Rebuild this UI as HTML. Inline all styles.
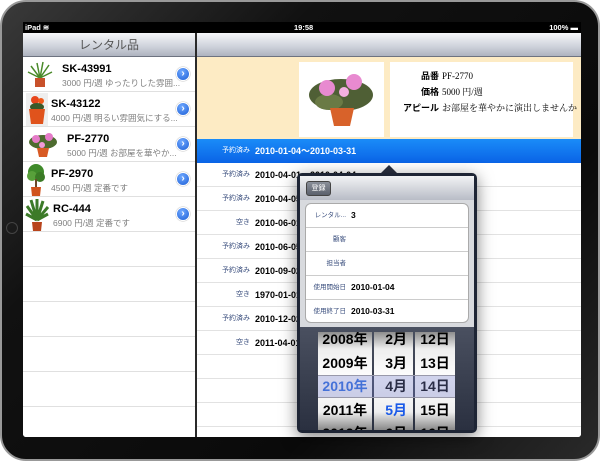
<!DOCTYPE html><html><head><meta charset="utf-8"><style>
*{margin:0;padding:0;box-sizing:border-box}
body{width:600px;height:461px;overflow:hidden;background:#fff;font-family:"Liberation Sans","Noto Sans CJK JP",sans-serif;position:relative}
.abs{position:absolute}
.bez{left:0;top:0;width:600px;height:461px;background:linear-gradient(135deg,#3a3a3a,#111 30%,#0a0a0a 70%,#2a2a2a);border-radius:26px;border:2px solid #999}
.status{left:23px;top:22px;width:558px;height:11px;background:#000;color:#fff;font-size:7.5px;font-weight:bold;line-height:11px}
.screen{left:23px;top:33px;width:558px;height:404px;background:#fff;overflow:hidden;border-radius:0 0 3px 3px}
.hdr{background:linear-gradient(#f6f7f9,#cdd1da 60%,#aeb3bf);border-bottom:1px solid #6d7380;height:24px}
.lrow{position:absolute;left:0;width:172px;height:35px;border-bottom:1px solid #e0e0e0}
.lrow b{position:absolute;font-size:11px;color:#000}
.lrow i{position:absolute;font-style:normal;font-size:8.5px;color:#808080;white-space:nowrap}
.disc{position:absolute;right:5px;top:10px;width:14px;height:14px;border-radius:50%;background:radial-gradient(circle at 40% 30%,#6fa8ff,#1d5fd6);border:1px solid #fff;box-shadow:0 0 1px #555;color:#fff;font-size:10px;line-height:12px;text-align:center;font-weight:bold}
.rrow{position:absolute;left:0;width:384px;height:24px;border-bottom:1px solid #e2e2e2;font-size:9px;font-weight:bold;line-height:24px;white-space:nowrap}
.rrow span{position:absolute;right:331px;font-size:7px;color:#3b4f7e;font-weight:normal}
.rrow em{position:absolute;left:58px;font-style:normal}
.prow{height:24px;border-bottom:1px solid #ccc;font-size:8.5px;font-weight:bold;line-height:23px;position:relative}
.prow span{position:absolute;right:122px;font-size:6.5px;color:#3b4f7e;font-weight:normal;white-space:nowrap}
.prow em{position:absolute;left:45px;font-style:normal}
.col{position:absolute;top:0;height:105px;background:linear-gradient(#777,#eee 20%,#fff 50%,#eee 80%,#777);font-size:14px;font-weight:bold;line-height:23.5px}
</style></head><body>
<div class="abs bez"></div>
<div class="abs" style="left:6px;top:222px;width:12px;height:12px;border-radius:50%;border:1px solid #444"></div>
<div class="abs status"><span class="abs" style="left:2px;top:0">iPad ≋</span><span class="abs" style="left:271px;top:0">19:58</span><span class="abs" style="right:3px;top:0">100% ▬</span></div>
<div class="abs screen">
 <div class="abs" style="left:0;top:0;width:172px;height:404px;background:#fff">
  <div class="hdr" style="text-align:center;font-size:12px;color:#555;line-height:24px">レンタル品</div>
  <div class="lrow" style="top:24px"><svg class="abs" style="left:4px;top:3px" width="26" height="30"><path d="M13 18 L4 6 M13 18 L10 3 M13 18 L16 2 M13 18 L22 5 M13 18 L25 12 M13 18 L1 12" stroke="#4a8a2a" stroke-width="1.5"/><rect x="8" y="18" width="10" height="9" fill="#c8512a"/></svg><b style="left:39px;top:6px">SK-43991</b><i style="left:39px;top:20px">3000 円/週 ゆったりした雰囲...</i><div class="disc">›</div></div>
  <div class="lrow" style="top:59px"><svg class="abs" style="left:3px;top:1px" width="22" height="33"><rect x="0" y="0" width="22" height="33" fill="#eee"/><circle cx="9" cy="7" r="4" fill="#e8461c"/><circle cx="15" cy="8" r="3" fill="#f05a1a"/><ellipse cx="11" cy="14" rx="7" ry="4" fill="#3a5a2a"/><path d="M3 16h16l-2 15H5z" fill="#e0531c"/></svg><b style="left:28px;top:6px">SK-43122</b><i style="left:28px;top:20px">4000 円/週 明るい雰囲気にする...</i><div class="disc">›</div></div>
  <div class="lrow" style="top:94px"><svg class="abs" style="left:4px;top:5px" width="32" height="26"><ellipse cx="16" cy="10" rx="14" ry="7" fill="#4d6b2f"/><circle cx="9" cy="7" r="4" fill="#e57bc8"/><circle cx="22" cy="5" r="4" fill="#e57bc8"/><circle cx="15" cy="13" r="3" fill="#f19ad8"/><path d="M10 16h12l-2 9h-8z" fill="#d85a24"/></svg><b style="left:44px;top:6px">PF-2770</b><i style="left:44px;top:20px">5000 円/週 お部屋を華やか...</i><div class="disc">›</div></div>
  <div class="lrow" style="top:129px"><svg class="abs" style="left:2px;top:1px" width="22" height="33"><circle cx="11" cy="9" r="8" fill="#3f8a2a"/><circle cx="7" cy="13" r="5" fill="#58a03a"/><circle cx="15" cy="14" r="5" fill="#3a7a25"/><rect x="10" y="16" width="2" height="8" fill="#6b4a2a"/><path d="M6 24h10l-1 9H7z" fill="#d0541e"/></svg><b style="left:28px;top:6px">PF-2970</b><i style="left:28px;top:20px">4500 円/週 定番です</i><div class="disc">›</div></div>
  <div class="lrow" style="top:164px"><svg class="abs" style="left:2px;top:1px" width="24" height="33"><path d="M12 22 L2 8 M12 22 L6 2 M12 22 L12 1 M12 22 L18 3 M12 22 L23 9 M12 22 L1 16 M12 22 L23 16" stroke="#3c7a28" stroke-width="3"/><path d="M7 24h10l-1 9H8z" fill="#b8441c"/></svg><b style="left:30px;top:6px">RC-444</b><i style="left:30px;top:20px">6900 円/週 定番です</i><div class="disc">›</div></div>
  <div class="lrow" style="top:199px"></div><div class="lrow" style="top:234px"></div><div class="lrow" style="top:269px"></div><div class="lrow" style="top:304px"></div><div class="lrow" style="top:339px"></div>
 </div>
 <div class="abs" style="left:172px;top:0;width:2px;height:404px;background:#2a2a2a"></div>
 <div class="abs" style="left:174px;top:0;width:384px;height:404px;background:#fff">
  <div class="hdr"></div>
  <div class="abs" style="left:0;top:24px;width:384px;height:82px;background:#fdebc4"></div>
  <div class="abs" style="left:102px;top:29px;width:85px;height:75px;background:#fff"><svg width="85" height="75"><ellipse cx="42" cy="33" rx="32" ry="16" fill="#4f5f35"/><ellipse cx="30" cy="40" rx="14" ry="8" fill="#6a7a45"/><circle cx="28" cy="26" r="8" fill="#e88ad0"/><circle cx="55" cy="20" r="8" fill="#e88ad0"/><circle cx="45" cy="30" r="5" fill="#f3b0e0"/><path d="M31 46h24l-4 18H35z" fill="#d8622a"/></svg></div>
  <div class="abs" style="left:193px;top:29px;width:183px;height:75px;background:#fff;font-family:'Liberation Serif','Noto Serif CJK SC',serif;font-size:9px;line-height:16px">
   <div class="abs" style="left:5px;top:6px;width:44px;text-align:right;font-family:'Noto Sans CJK JP',sans-serif;font-weight:bold;line-height:16px">品番<br>価格<br>アピール</div>
   <div class="abs" style="left:52px;top:6px;white-space:nowrap">PF-2770<br>5000 円/週<br>お部屋を華やかに演出しませんか</div>
  </div>
  <div class="rrow" style="top:106px;background:linear-gradient(#1a8cf8,#0a63e6);color:#fff;border:0"><span style="color:#fff">予約済み</span><em>2010-01-04〜2010-03-31</em></div>
  <div class="rrow" style="top:130px"><span>予約済み</span><em>2010-04-01〜2010-04-04</em></div>
  <div class="rrow" style="top:154px"><span>予約済み</span><em>2010-04-05</em></div>
  <div class="rrow" style="top:178px"><span>空き</span><em>2010-06-01</em></div>
  <div class="rrow" style="top:202px"><span>予約済み</span><em>2010-06-05</em></div>
  <div class="rrow" style="top:226px"><span>予約済み</span><em>2010-09-02</em></div>
  <div class="rrow" style="top:250px"><span>空き</span><em>1970-01-01</em></div>
  <div class="rrow" style="top:274px"><span>予約済み</span><em>2010-12-02</em></div>
  <div class="rrow" style="top:298px"><span>空き</span><em>2011-04-01</em></div>
  <div class="rrow" style="top:322px"></div><div class="rrow" style="top:346px"></div><div class="rrow" style="top:370px"></div>
 </div>
</div>
<div class="abs" style="left:380px;top:165px;width:0;height:0;border-left:9px solid transparent;border-right:9px solid transparent;border-bottom:9px solid #2a3040"></div>
<div class="abs" style="left:297px;top:173px;width:180px;height:260px;background:#1e2535;border-radius:5px;box-shadow:0 4px 16px rgba(0,0,0,.5);overflow:hidden">
 <div class="abs" style="left:3px;top:3px;width:174px;height:151px;background:#d8dade">
  <div style="height:24px;background:linear-gradient(#f2f3f5,#b8bcc6)"><div class="abs" style="left:6px;top:5px;width:25px;height:15px;border-radius:3px;background:linear-gradient(#8a8f99,#5a606c);color:#fff;font-size:7px;text-align:center;line-height:13px;border:1px solid #444">登録</div></div>
  <div class="abs" style="left:5px;top:27px;width:164px;height:120px;background:#fff;border:1px solid #aaa;border-radius:6px;overflow:hidden">
   <div class="prow"><span>レンタル...</span><em>3</em></div>
   <div class="prow"><span>顧客</span></div>
   <div class="prow"><span>担当者</span></div>
   <div class="prow"><span>使用開始日</span><em>2010-01-04</em></div>
   <div class="prow" style="border:0"><span>使用終了日</span><em>2010-03-31</em></div>
  </div>
 </div>
 <div class="abs" style="left:3px;top:154px;width:174px;height:103px;background:linear-gradient(#4a5060,#2a3040)">
  <div class="abs" style="left:18px;top:5px;width:137px;height:98px;overflow:hidden">
   <div class="col" style="left:0;width:54px;text-align:center;top:-4px">2008年<br>2009年<br><span style="color:#2a6ae0">2010年</span><br>2011年<br>2012年</div>
   <div class="col" style="left:56px;width:39px;text-align:right;padding-right:6px;top:-4px">2月<br>3月<br>4月<br><span style="color:#1a5ae8">5月</span><br>6月</div>
   <div class="col" style="left:97px;width:40px;text-align:center;top:-4px">12日<br>13日<br>14日<br>15日<br>16日</div>
   <div class="abs" style="left:0;top:43px;width:137px;height:23px;background:rgba(120,130,200,.35);border-top:1px solid #99a;border-bottom:1px solid #99a"></div>
  </div>
 </div>
</div>
</body></html>
